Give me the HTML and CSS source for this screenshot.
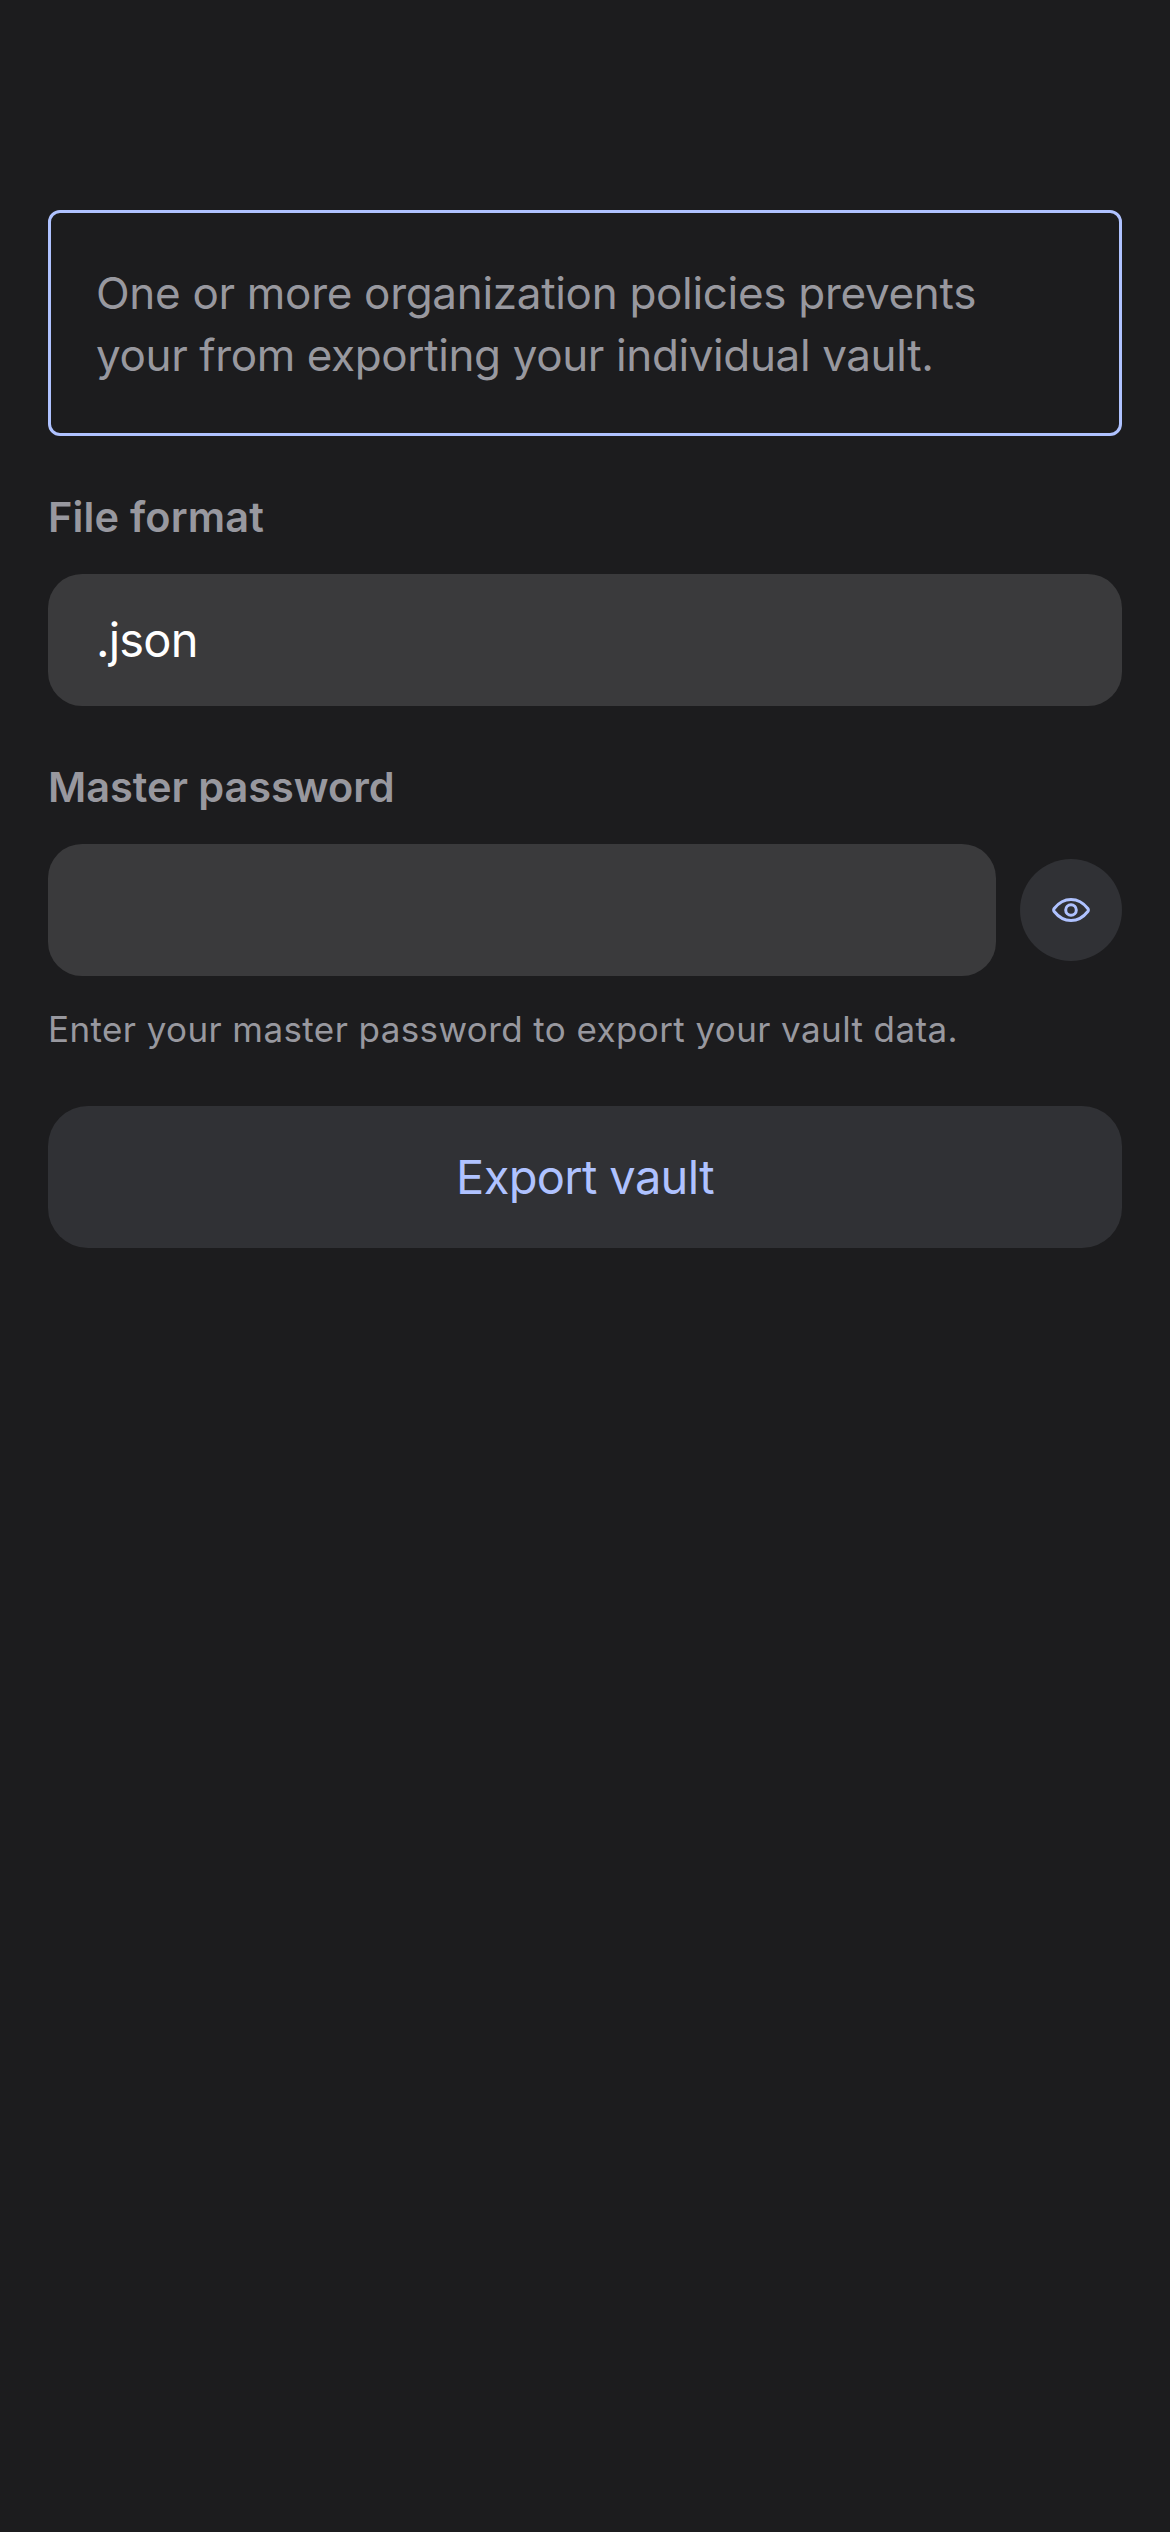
FILE: index.html
```
<!DOCTYPE html>
<html lang="en">
<head>
  <meta charset="utf-8">
  <title>Export vault</title>
  <link rel="stylesheet" href="styles.css">
</head>
<body>
  <main class="screen">
    <p class="notice"><span class="notice-first">One or more organization policies prevents</span><br>your from exporting your individual vault.</p>

    <section class="group">
      <div class="label label-format">File format</div>
      <div class="field">.json</div>
    </section>

    <section class="group">
      <div class="label">Master password</div>
      <div class="row">
        <div class="field"></div>
        <button class="reveal" type="button" aria-label="Show password">
          <svg class="eye" viewBox="0 0 38 24">
            <path d="M2.2 10.5C6.6 4.9 12.5 1.5 19 1.5S31.4 4.9 35.8 10.5Q36.9 12 35.8 13.5C31.4 19.1 25.5 22.5 19 22.5S6.6 19.1 2.2 13.5Q1.1 12 2.2 10.5Z"/>
            <circle cx="19" cy="12" r="5.3"/>
          </svg>
        </button>
      </div>
      <div class="hint">Enter your master password to export your vault data.</div>
    </section>

    <button class="export" type="button">Export vault</button>
  </main>
</body>
</html>
```

FILE: styles.css
```
* {
  box-sizing: border-box;
}

body {
  margin: 0;
  min-height: 2532px;
  background: #1c1c1e;
  color: #98989f;
  font-family: Inter, "Liberation Sans", sans-serif;
}

.screen {
  display: flex;
  flex-direction: column;
  gap: 56px;
  padding: 210px 48px 0;
}

.notice {
  margin: 0;
  padding: 49px 45px 47px;
  border: 3px solid #afc2ff;
  border-radius: 12px;
  font-size: 44px;
  line-height: 62px;
  letter-spacing: -0.38px;
  white-space: nowrap;
}

.notice-first {
  letter-spacing: -0.31px;
}

.group {
  display: flex;
  flex-direction: column;
  gap: 32px;
}

.label {
  font-size: 41.5px;
  font-weight: 600;
  line-height: 50px;
  letter-spacing: -0.05px;
}

.label-format {
  letter-spacing: 0.16px;
}

.row {
  display: flex;
  align-items: center;
  gap: 24px;
}

.field {
  display: flex;
  flex: 1 0 auto;
  align-items: center;
  height: 132px;
  padding: 0 48px 2px;
  border-radius: 34px;
  background: #3a3a3c;
  color: #fff;
  font-size: 47px;
  letter-spacing: -0.8px;
}

.reveal {
  display: flex;
  align-items: center;
  justify-content: center;
  width: 102px;
  height: 102px;
  padding: 0;
  border: 0;
  border-radius: 50%;
  background: #303135;
}

.eye {
  width: 38px;
  height: 24px;
  fill: none;
  stroke: #afc2ff;
  stroke-width: 3;
}

.hint {
  font-size: 35px;
  line-height: 42px;
  letter-spacing: 0.4px;
}

.export {
  height: 142px;
  padding: 0 0 2px;
  border: 0;
  border-radius: 40px;
  background: #303135;
  color: #afc2ff;
  font-family: inherit;
  font-size: 47px;
  letter-spacing: -0.66px;
}
```
